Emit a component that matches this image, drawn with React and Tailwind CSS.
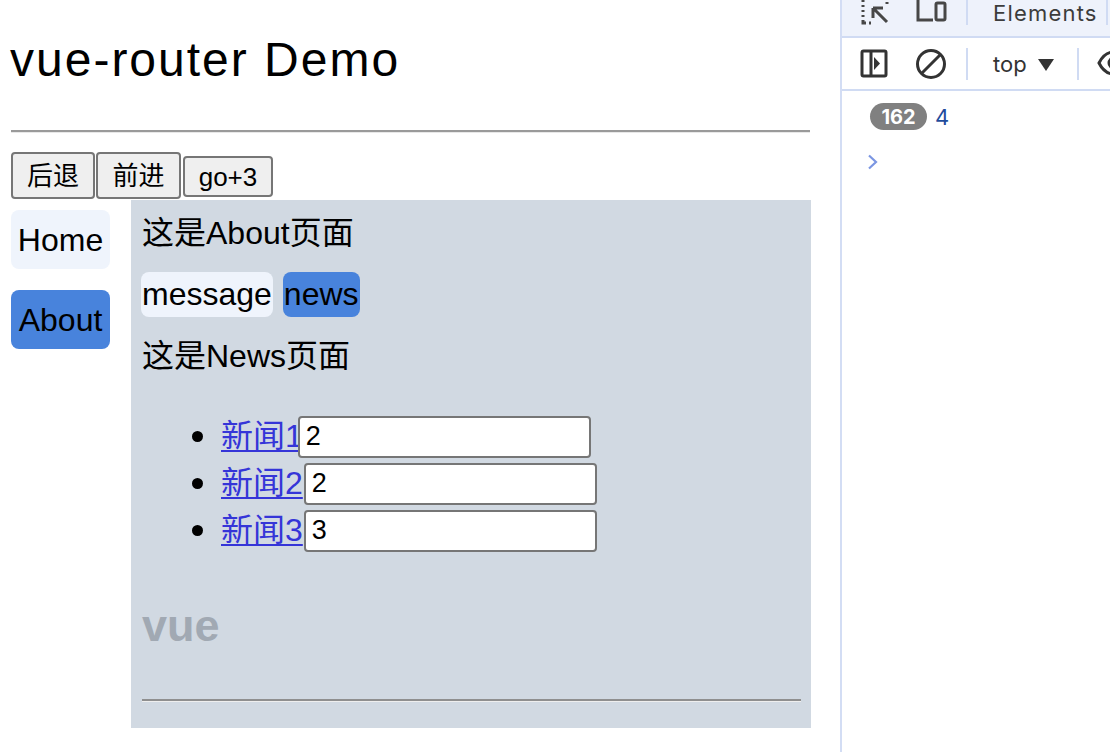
import React from "react";

const SANS = { fontFamily: '"Liberation Sans", "Noto Sans CJK SC", Arial, sans-serif' };
const UI = { fontFamily: 'Inter, "Liberation Sans", sans-serif' };

function NewsRow({ label, value, first }) {
  return (
    <div className="flex h-[47px] items-center">
      <span className="ml-[50px] h-[11px] w-[11px] rounded-full bg-black" />
      <a
        href="#"
        className="ml-[18px] text-[32px] leading-[37px] text-[#3535d8] underline decoration-[2px] underline-offset-[3px]"
      >
        {label}
      </a>
      <input
        readOnly
        value={value}
        className={
          "h-[42px] w-[293px] rounded-[4px] border-2 border-[#767676] bg-white px-[6px] text-[27px] text-black outline-none " +
          (first ? "-ml-[5px]" : "ml-[1px]")
        }
        style={SANS}
      />
    </div>
  );
}

export default function App() {
  return (
    <div className="flex h-[752px] w-[1110px] overflow-hidden bg-white text-black" style={SANS}>
      {/* Page */}
      <div className="w-[840px] shrink-0 pl-[11px]">
        <h1 className="mt-[32px] h-[56px] text-[48px] font-normal leading-[56px] tracking-[2px] -ml-[1px]">
          vue-router Demo
        </h1>
        <div className="mt-[42px] w-[799px] border-t-2 border-b border-t-[#9a9a9a] border-b-[#e8e8e8]" />
        <div className="mt-[19px] flex items-start">
          <button className="h-[47px] w-[84px] rounded-[4px] border-2 border-[#767676] bg-[#efefef] text-[26px] leading-[30px]">
            后退
          </button>
          <button className="ml-[1px] h-[47px] w-[85px] rounded-[4px] border-2 border-[#767676] bg-[#efefef] text-[26px] leading-[30px]">
            前进
          </button>
          <button className="ml-[2px] mt-[4px] h-[41px] w-[90px] rounded-[4px] border-2 border-[#767676] bg-[#efefef] text-[26px] leading-[30px]">
            go+3
          </button>
        </div>
        <div className="mt-[1px] flex items-start">
          <nav className="flex w-[99px] flex-col">
            <a href="#" className="mt-[10px] flex h-[59px] items-center justify-center rounded-[8px] bg-[#eff4fc] text-[32px] text-black no-underline">
              Home
            </a>
            <a href="#" className="mt-[21px] flex h-[59px] items-center justify-center rounded-[8px] bg-[#4883dc] text-[32px] text-black no-underline">
              About
            </a>
          </nav>
          <div className="ml-[21px] h-[528px] w-[680px] bg-[#d1d9e2] pl-[11px] pr-[11px] pt-[15px]">
            <p className="h-[37px] text-[32px] leading-[37px]">这是About页面</p>
            <div className="mt-[20px] flex h-[45px] gap-[10px]">
              <a href="#" className="-ml-[1px] rounded-[8px] bg-[#eff4fc] px-[1px] text-[32px] leading-[45px] text-black">
                message
              </a>
              <a href="#" className="rounded-[8px] bg-[#4883dc] px-[1px] text-[32px] leading-[45px] text-black">
                news
              </a>
            </div>
            <p className="mt-[21px] h-[37px] text-[32px] leading-[37px]">这是News页面</p>
            <div className="mt-[38px]">
              <NewsRow label="新闻1" value="2" first />
              <NewsRow label="新闻2" value="2" />
              <NewsRow label="新闻3" value="3" />
            </div>
            <div className="mt-[47px] h-[50px] text-[45px] font-bold leading-[50px] text-[#a1a9b3]">vue</div>
            <div className="mt-[48px] w-[659px] border-t-2 border-b border-t-[#8f8f8f] border-b-[#eeeeee]" />
          </div>
        </div>
      </div>

      {/* Divider */}
      <div className="w-[2px] shrink-0 bg-[#d3ddf4]" />

      {/* DevTools */}
      <div className="flex flex-1 flex-col bg-white" style={UI}>
        <div className="relative h-[38px] shrink-0 border-b-2 border-[#d0dbf3] bg-[#eef2fb]">
          <svg className="absolute left-[17px] top-0" width="32" height="26" viewBox="0 0 32 26" fill="none">
            <path d="M4 0v2M4 5v2M4 10v2M4 15v2M4 20v3H7M10 23h2" stroke="#474747" strokeWidth="3" />
            <path d="M28 2v2" stroke="#474747" strokeWidth="3" />
            <path d="M14 8h10M14 8v10M14 8l14 14" stroke="#474747" strokeWidth="3" />
          </svg>
          <svg className="absolute left-[74px] top-0" width="32" height="24" viewBox="0 0 32 24" fill="none">
            <path d="M2 0v20h15" stroke="#474747" strokeWidth="3" />
            <rect x="20" y="3" width="9" height="17" rx="1.5" stroke="#474747" strokeWidth="3" />
          </svg>
          <div className="absolute left-[124px] top-0 h-[25px] w-[2px] bg-[#d0dbf3]" />
          <div className="absolute left-[151px] top-[-1px] text-[22px] leading-[28px] tracking-[1.2px] text-[#3c3c3c]">
            Elements
          </div>
          <div className="absolute left-[264px] top-0 h-[25px] w-[2px] bg-[#d0dbf3]" />
        </div>
        <div className="relative h-[53px] shrink-0 border-b-2 border-[#d0dbf3]">
          <svg className="absolute left-[17px] top-[10px]" width="30" height="30" viewBox="0 0 30 30" fill="none">
            <rect x="3" y="3" width="24" height="25" rx="1.5" stroke="#333" strokeWidth="3" />
            <path d="M12 3v25" stroke="#333" strokeWidth="3" />
            <path d="M15 9l6 6.5-6 6.5z" fill="#333" />
          </svg>
          <svg className="absolute left-[72px] top-[9px]" width="34" height="34" viewBox="0 0 34 34" fill="none">
            <circle cx="17" cy="17" r="13.5" stroke="#333" strokeWidth="3" />
            <path d="M26.5 7.5L7.5 26.5" stroke="#333" strokeWidth="3" />
          </svg>
          <div className="absolute left-[124px] top-[10px] h-[32px] w-[2px] bg-[#d0dbf3]" />
          <div className="absolute left-[151px] top-[11px] flex items-center text-[22px] leading-[30px] text-[#333]">
            <span>top</span>
            <svg className="ml-[11px] mt-[2px]" width="16" height="12" viewBox="0 0 16 12">
              <path d="M0 0h16L8 12z" fill="#333" />
            </svg>
          </div>
          <div className="absolute left-[235px] top-[10px] h-[32px] w-[2px] bg-[#d0dbf3]" />
          <svg className="absolute left-[255px] top-[12px]" width="30" height="26" viewBox="0 0 30 26" fill="none">
            <path d="M2 13C6 5 12 2 17 2s11 3 15 11c-4 8-10 11-15 11S6 21 2 13z" stroke="#333" strokeWidth="3" />
            <circle cx="17" cy="13" r="5" stroke="#333" strokeWidth="3" />
          </svg>
        </div>
        <div className="relative flex-1">
          <div className="absolute left-[28px] top-[12px] flex items-center">
            <span className="flex h-[27px] w-[57px] items-center justify-center rounded-full bg-[#808080] text-[20px] font-bold leading-none text-white">
              162
            </span>
            <span className="ml-[8px] text-[22px] leading-none text-[#1f4c9c]">4</span>
          </div>
          <svg className="absolute left-[25px] top-[63px]" width="12" height="16" viewBox="0 0 12 16" fill="none">
            <path d="M2 1.5l7 6.5-7 6.5" stroke="#7b96e2" strokeWidth="2.2" />
          </svg>
        </div>
      </div>
    </div>
  );
}
